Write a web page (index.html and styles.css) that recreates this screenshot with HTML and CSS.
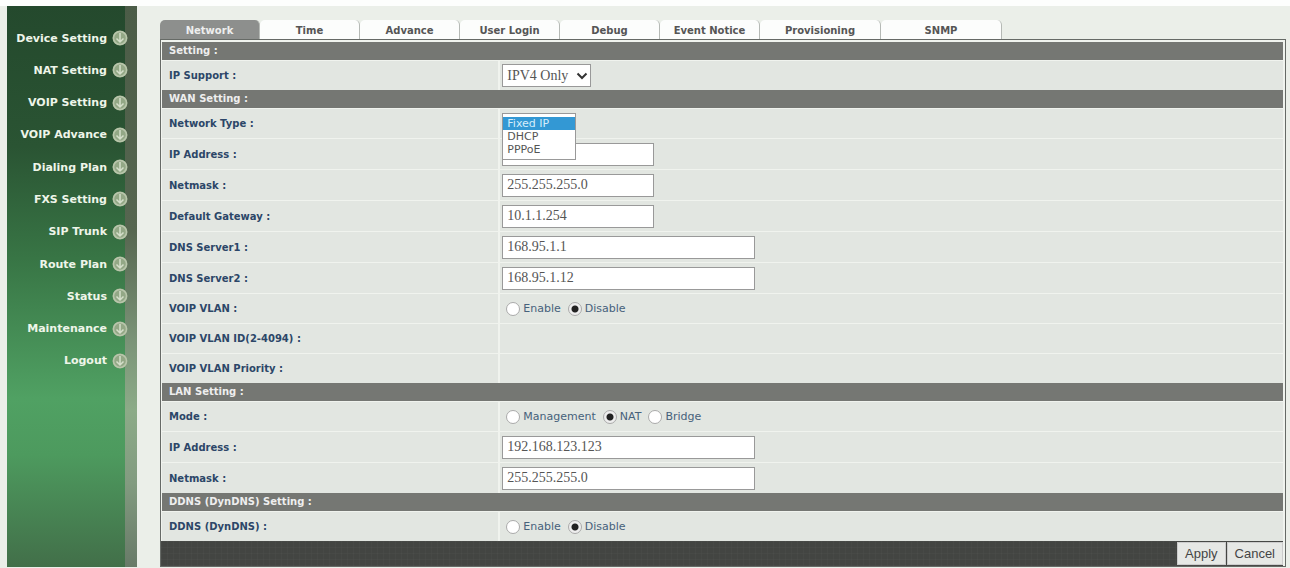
FILE: index.html
```
<!DOCTYPE html>
<html lang="en">

<head>
    <meta charset="UTF-8">
    <meta name="viewport" content="width=device-width, initial-scale=1.0">
    <title>Network Setting</title>
    <link rel="stylesheet" href="styles.css">
</head>

<body>
    <svg class="symbols" aria-hidden="true">
        <symbol id="arrow" viewBox="0 0 16 16">
            <circle cx="8" cy="8" r="7.5" fill="#93a886" />
            <circle cx="8" cy="8" r="6.5" fill="none" stroke="#b9c6ac" stroke-width="1.500" />
            <path d="M8 3v9M4.500 8.500L8 12l3.500-3.500" fill="none" stroke="#d5dfcb" stroke-width="1.500" />
        </symbol>
    </svg>

    <div class="page">
        <nav class="sidebar">
            <ul class="menu">
                <li><a href="#">Device Setting<svg class="icon"><use href="#arrow" /></svg></a></li>
                <li><a href="#">NAT Setting<svg class="icon"><use href="#arrow" /></svg></a></li>
                <li><a href="#">VOIP Setting<svg class="icon"><use href="#arrow" /></svg></a></li>
                <li><a href="#">VOIP Advance<svg class="icon"><use href="#arrow" /></svg></a></li>
                <li><a href="#">Dialing Plan<svg class="icon"><use href="#arrow" /></svg></a></li>
                <li><a href="#">FXS Setting<svg class="icon"><use href="#arrow" /></svg></a></li>
                <li><a href="#">SIP Trunk<svg class="icon"><use href="#arrow" /></svg></a></li>
                <li><a href="#">Route Plan<svg class="icon"><use href="#arrow" /></svg></a></li>
                <li><a href="#">Status<svg class="icon"><use href="#arrow" /></svg></a></li>
                <li><a href="#">Maintenance<svg class="icon"><use href="#arrow" /></svg></a></li>
                <li><a href="#">Logout<svg class="icon"><use href="#arrow" /></svg></a></li>
            </ul>
        </nav>

        <main class="content">
            <div class="tabs">
                <a class="tab active" href="#">Network</a>
                <a class="tab" href="#">Time</a>
                <a class="tab" href="#">Advance</a>
                <a class="tab" href="#">User Login</a>
                <a class="tab" href="#">Debug</a>
                <a class="tab" href="#">Event Notice</a>
                <a class="tab wide" href="#">Provisioning</a>
                <a class="tab wide" href="#">SNMP</a>
            </div>

            <form class="panel" id="networkForm">
                <h2>Setting :</h2>
                <div class="row">
                    <label class="name" for="ip_support">IP Support :</label>
                    <div class="field">
                        <div class="select">
                            <select id="ip_support" name="ip_support">
                                <option>IPV4 Only</option>
                            </select>
                            <svg class="chevron" viewBox="0 0 12 8"><path d="M1.500 1.500L6 6l4.500-4.500" fill="none" stroke="#333" stroke-width="2" /></svg>
                        </div>
                    </div>
                </div>

                <h2>WAN Setting :</h2>
                <div class="row">
                    <label class="name" for="network_type">Network Type :</label>
                    <div class="field">
                        <select class="list" id="network_type" name="network_type" size="3">
                            <option selected>Fixed IP</option>
                            <option>DHCP</option>
                            <option>PPPoE</option>
                        </select>
                    </div>
                </div>
                <div class="row tall">
                    <label class="name" for="wan_ip">IP Address :</label>
                    <div class="field"><input class="short" type="text" id="wan_ip" name="wan_ip"></div>
                </div>
                <div class="row tall">
                    <label class="name" for="wan_mask">Netmask :</label>
                    <div class="field"><input class="short" type="text" id="wan_mask" name="wan_mask" value="255.255.255.0"></div>
                </div>
                <div class="row tall">
                    <label class="name" for="gateway">Default Gateway :</label>
                    <div class="field"><input class="short" type="text" id="gateway" name="gateway" value="10.1.1.254"></div>
                </div>
                <div class="row tall">
                    <label class="name" for="dns1">DNS Server1 :</label>
                    <div class="field"><input type="text" id="dns1" name="dns1" value="168.95.1.1"></div>
                </div>
                <div class="row tall">
                    <label class="name" for="dns2">DNS Server2 :</label>
                    <div class="field"><input type="text" id="dns2" name="dns2" value="168.95.1.12"></div>
                </div>
                <div class="row">
                    <span class="name">VOIP VLAN :</span>
                    <div class="field">
                        <label class="choice"><input type="radio" name="vlan" value="1">Enable</label>
                        <label class="choice"><input type="radio" name="vlan" value="0" checked>Disable</label>
                    </div>
                </div>
                <div class="row">
                    <span class="name">VOIP VLAN ID(2-4094) :</span>
                    <div class="field"></div>
                </div>
                <div class="row">
                    <span class="name">VOIP VLAN Priority :</span>
                    <div class="field"></div>
                </div>

                <h2>LAN Setting :</h2>
                <div class="row">
                    <span class="name">Mode :</span>
                    <div class="field">
                        <label class="choice"><input type="radio" name="mode" value="management">Management</label>
                        <label class="choice"><input type="radio" name="mode" value="nat" checked>NAT</label>
                        <label class="choice"><input type="radio" name="mode" value="bridge">Bridge</label>
                    </div>
                </div>
                <div class="row tall">
                    <label class="name" for="lan_ip">IP Address :</label>
                    <div class="field"><input type="text" id="lan_ip" name="lan_ip" value="192.168.123.123"></div>
                </div>
                <div class="row tall">
                    <label class="name" for="lan_mask">Netmask :</label>
                    <div class="field"><input type="text" id="lan_mask" name="lan_mask" value="255.255.255.0"></div>
                </div>

                <h2>DDNS (DynDNS) Setting :</h2>
                <div class="row">
                    <span class="name">DDNS (DynDNS) :</span>
                    <div class="field">
                        <label class="choice"><input type="radio" name="ddns" value="1">Enable</label>
                        <label class="choice"><input type="radio" name="ddns" value="0" checked>Disable</label>
                    </div>
                </div>

                <div class="actions">
                    <button type="submit">Apply</button>
                    <button type="reset">Cancel</button>
                </div>
            </form>
        </main>
    </div>
</body>

</html>
```
FILE: styles.css
```
* {
    box-sizing: border-box;
}

body {
    font-family: Verdana, "DejaVu Sans", sans-serif;
    font-size: 10px;
    background-color: #ebefe9;
    margin: 0;
}

.symbols {
    display: none;
}

.page {
    display: flex;
    min-height: 100vh;
    padding: 0 4px 1px 7px;
    border-top: 6px solid #fdfefd;
}

/* left menu */
.sidebar {
    flex: 0 0 130px;
    padding-top: 16px;
    background: linear-gradient(#4b5c47, #566650 40%, #7b9478 60%, #8cab88 72%, #829b80 85%, #687a68) right / 12px 100% no-repeat,
        linear-gradient(#24492d, #2a5433 25%, #387545 45%, #50a163 70%, #4d9a5e 80%, #426f49);
}

.menu {
    display: grid;
    grid-auto-rows: 1fr;
    height: 355px;
    margin: 0;
    padding: 0;
    list-style: none;
}

.menu a {
    display: flex;
    align-items: center;
    justify-content: flex-end;
    gap: 5px;
    height: 100%;
    padding-right: 9px;
    color: #eef5e9;
    font-size: 11px;
    font-weight: bold;
    text-decoration: none;
    white-space: nowrap;
}

.icon {
    width: 16px;
    height: 16px;
}

/* tabs */
.content {
    flex: 1;
    min-width: 0;
    padding: 14px 0 0 23px;
}

.tabs {
    display: flex;
}

.tab {
    flex: 0 0 100px;
    height: 19px;
    border-right: 1px solid #b5b9b5;
    border-radius: 5px 5px 0 0;
    background-color: #fcfdfc;
    color: #555;
    font-weight: bold;
    line-height: 22px;
    text-align: center;
    text-decoration: none;
}

.tab.wide {
    flex-basis: 121px;
}

.tab.active {
    background-color: #8d8f8d;
    color: #eee;
}

/* settings form */
.panel {
    border: 1px solid #666a66;
    padding: 2px 2px 0 1px;
    background-color: #f0f3ee;
}

h2 {
    height: 18px;
    margin: 0;
    padding-left: 7px;
    background-color: #757773;
    color: #eee;
    font-size: 10px;
    line-height: 18px;
}

.row {
    display: grid;
    grid-template-columns: 30% 1fr;
    column-gap: 2px;
    height: 30px;
    padding-top: 1px;
}

.row.tall {
    height: 31px;
}

.name,
.field {
    display: flex;
    align-items: center;
    background-color: #e2e6e1;
}

.name {
    padding-left: 7px;
    color: #2c4668;
    font-weight: bold;
}

.field {
    position: relative;
    padding-left: 2px;
}

input[type="text"],
.select select {
    width: 253px;
    height: 23px;
    padding: 1px 4px;
    border: 1px solid #999;
    border-radius: 0;
    background-color: #fff;
    color: #555;
    font-family: "Liberation Serif", serif;
    font-size: 14px;
}

input.short {
    width: 152px;
}

.select {
    position: relative;
}

.select select {
    width: 89px;
    appearance: none;
}

.chevron {
    position: absolute;
    top: 8px;
    right: 3px;
    width: 12px;
    height: 8px;
    pointer-events: none;
}

/* open list, lies over the row below */
.list {
    position: absolute;
    top: 4px;
    left: 2px;
    z-index: 1;
    width: 74px;
    height: 47px;
    padding: 3px 0 0;
    border: 1px solid #999;
    border-radius: 0;
    background-color: #fff;
    font-family: Verdana, "DejaVu Sans", sans-serif;
    font-size: 11px;
    overflow: hidden;
}

.list option {
    min-height: 13px;
    height: 13px;
    padding: 0 4px;
    color: #555;
    line-height: 13px;
}

.list option:checked {
    background: linear-gradient(#3398d4, #3398d4);
    color: #d5edfb;
}

.choice {
    display: flex;
    align-items: center;
    gap: 3px;
    margin-right: 7px;
    color: #46617b;
    font-size: 11px;
}

.choice:first-child {
    margin-left: 4px;
}

input[type="radio"] {
    appearance: none;
    width: 14px;
    height: 14px;
    margin: 0;
    border: 1px solid #aaa;
    border-radius: 50%;
    background-color: #fff;
}

input[type="radio"]:checked {
    background: radial-gradient(circle, #222 3px, #eee 4px);
}

/* bottom bar */
.actions {
    display: flex;
    justify-content: flex-end;
    gap: 1px;
    margin-left: -1px;
    padding: 1px 0;
    background-color: #434542;
    background-image: repeating-linear-gradient(to right, rgba(255, 255, 255, 0.02) 0 1px, transparent 1px 6px),
        repeating-linear-gradient(rgba(255, 255, 255, 0.02) 0 1px, transparent 1px 6px);
}

button {
    height: 23px;
    padding: 0 7px;
    border: 1px solid #ccc;
    background-color: #e6e8e5;
    color: #444;
    font-family: "Liberation Sans", Arial, sans-serif;
    font-size: 13px;
    cursor: pointer;
}

button:hover {
    background-color: #fff;
}
```
